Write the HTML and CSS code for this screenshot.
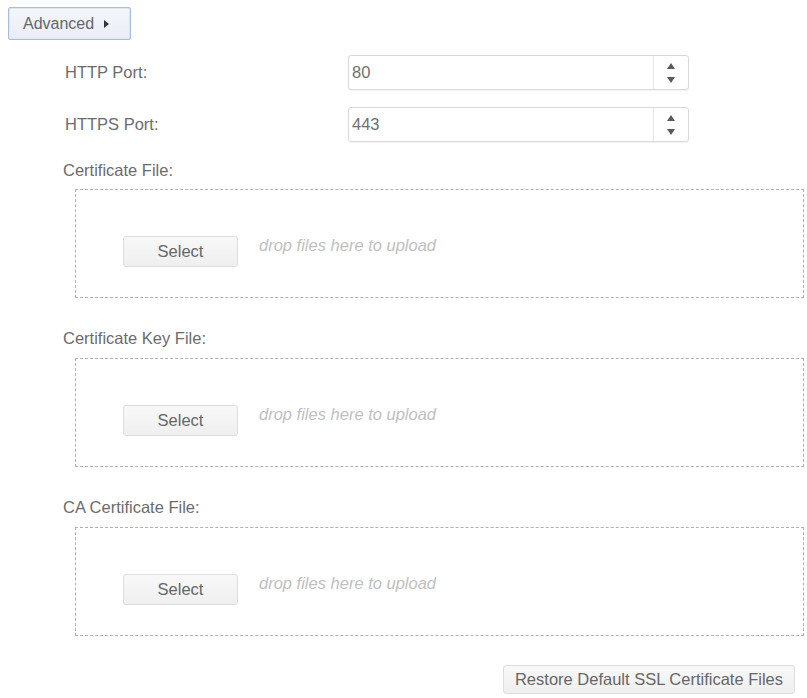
FILE: index.html
```html
<!DOCTYPE html>
<html lang="en">
<head>
<meta charset="utf-8">
<title>SSL Settings</title>
<link rel="stylesheet" href="styles.css">
</head>
<body>
<div class="page">
  <button class="advanced" type="button">Advanced <span class="caret"></span></button>

  <div class="ports">
    <div class="port-row">
      <label class="port-label">HTTP Port:</label>
      <div class="spin-input">
        <span class="spin-value">80</span>
        <span class="spin-buttons"><span class="up"></span><span class="down"></span></span>
      </div>
    </div>
    <div class="port-row">
      <label class="port-label">HTTPS Port:</label>
      <div class="spin-input">
        <span class="spin-value">443</span>
        <span class="spin-buttons"><span class="up"></span><span class="down"></span></span>
      </div>
    </div>
  </div>

  <div class="section first">
    <div class="section-label">Certificate File:</div>
    <div class="dropzone">
      <button class="select-btn" type="button">Select</button>
      <span class="drop-text">drop files here to upload</span>
    </div>
  </div>

  <div class="section">
    <div class="section-label">Certificate Key File:</div>
    <div class="dropzone">
      <button class="select-btn" type="button">Select</button>
      <span class="drop-text">drop files here to upload</span>
    </div>
  </div>

  <div class="section">
    <div class="section-label">CA Certificate File:</div>
    <div class="dropzone">
      <button class="select-btn" type="button">Select</button>
      <span class="drop-text">drop files here to upload</span>
    </div>
  </div>

  <div class="actions">
    <button class="restore-btn" type="button">Restore Default SSL Certificate Files</button>
  </div>
</div>
</body>
</html>
```

FILE: styles.css
```css
html, body {
  margin: 0;
  padding: 0;
  background: #ffffff;
}

body {
  font-family: "Liberation Sans", Arial, sans-serif;
  font-size: 16.5px;
  color: #6c6c6c;
}

.page {
  width: 807px;
  padding-top: 7px;
}

button {
  font-family: "Liberation Sans", Arial, sans-serif;
  font-size: 16.5px;
  color: #666666;
  cursor: pointer;
}

.advanced {
  display: flex;
  align-items: center;
  gap: 10px;
  margin-left: 8px;
  width: 123px;
  height: 33px;
  padding: 0 0 0 14px;
  border: 1px solid #a9bddf;
  border-radius: 2px;
  background: linear-gradient(#f4f6fb, #e9edf6);
  box-shadow: inset 0 0 0 1px #dfe6f3;
  color: #666666;
  font-size: 16px;
}

.caret {
  width: 0;
  height: 0;
  border-top: 4px solid transparent;
  border-bottom: 4px solid transparent;
  border-left: 5px solid #333333;
  margin-top: 1px;
}

.ports {
  margin-top: 15px;
  display: flex;
  flex-direction: column;
  gap: 17px;
}

.port-row {
  display: flex;
  align-items: center;
  padding-left: 65px;
}

.port-label {
  width: 283px;
  line-height: 19px;
  color: #6c6c6c;
}

.spin-input {
  box-sizing: border-box;
  width: 341px;
  height: 35px;
  display: flex;
  align-items: stretch;
  border: 1px solid #d9d9d9;
  border-radius: 3px;
  background: #ffffff;
  box-shadow: 0 1px 1px rgba(0, 0, 0, 0.05);
}

.spin-value {
  flex: 1;
  display: flex;
  align-items: center;
  padding-left: 3px;
  color: #707070;
}

.spin-buttons {
  width: 34px;
  border-left: 1px solid #e6e6e6;
  display: flex;
  flex-direction: column;
  align-items: center;
  justify-content: center;
  gap: 8px;
}

.up {
  width: 0;
  height: 0;
  border-left: 4px solid transparent;
  border-right: 4px solid transparent;
  border-bottom: 6px solid #5a5a5a;
}

.down {
  width: 0;
  height: 0;
  border-left: 4px solid transparent;
  border-right: 4px solid transparent;
  border-top: 6px solid #5a5a5a;
}

.section {
  margin-top: 31px;
  padding-left: 63px;
}

.section.first {
  margin-top: 19px;
}

.section-label {
  line-height: 19px;
  color: #6c6c6c;
}

.dropzone {
  box-sizing: border-box;
  margin-top: 10px;
  margin-left: 12px;
  width: 729px;
  height: 109px;
  border: 1px dashed #b0b0b0;
  display: flex;
  align-items: flex-start;
  gap: 21px;
  padding: 46px 0 0 47px;
}

.section.first .dropzone {
  margin-top: 9px;
}

.select-btn {
  width: 115px;
  height: 31px;
  border: 1px solid #dddddd;
  border-radius: 3px;
  background: linear-gradient(#f8f8f8, #efefef);
  color: #666666;
  padding: 0;
}

.drop-text {
  line-height: 19px;
  font-style: italic;
  color: #c0c0c0;
}

.actions {
  display: flex;
  justify-content: flex-end;
  padding-right: 12px;
  margin-top: 29px;
}

.restore-btn {
  width: 292px;
  height: 29px;
  border: 1px solid #dddddd;
  border-radius: 3px;
  background: linear-gradient(#f8f8f8, #efefef);
  color: #666666;
  padding: 0;
}
```
